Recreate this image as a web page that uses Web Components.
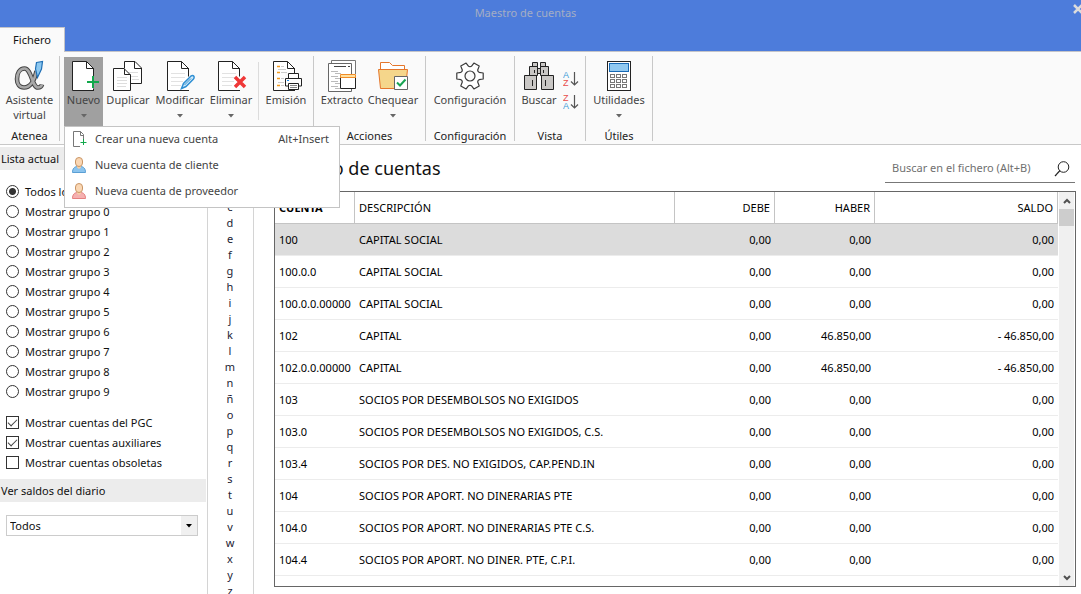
<!DOCTYPE html>
<html lang="es">
<head>
<meta charset="utf-8">
<meta name="viewport" content="width=device-width, initial-scale=1">
<title>Maestro de cuentas</title>
<style>
  html, body { margin: 0; height: 100%; }
  body { font: 11px/16px "Noto Sans", "Open Sans", sans-serif; color: #111; background: #fff; overflow: hidden; }
</style>
</head>
<body>
<accounts-app></accounts-app>

<script>
const define = (name, html, setup) => {
  const template = document.createElement('template');
  template.innerHTML = html;
  customElements.define(name, class extends HTMLElement {
    constructor() {
      super();
      this.attachShadow({ mode: 'open' }).append(template.content.cloneNode(true));
    }
    connectedCallback() {
      if (setup && !this.ready) { this.ready = true; setup.call(this, this.shadowRoot); }
    }
  });
};

/* Icon drawings: the first entry is the viewBox, the second the shapes */
const person = (body, edge) => `
  <path d="M1.5 15.5c0-4 2-6 5-6h3c3 0 5 2 5 6z" fill="${body}" stroke="${edge}"/>
  <path d="M6 8h4v2.500l-2 1.500l-2-1.500z" fill="#f5cfa8"/>
  <rect x="4.500" y="0.500" width="7" height="9" rx="3.500" fill="#fad7b4" stroke="#c99565"/>`;
const page = (x, lines) => `
  <path d="M${x}.5 1.500H${x + 14.5}L${x + 21.5} 8.500V30.500H${x}.5z" fill="#fff"/>
  <path d="M${x + 22} 30.500H${x}.5V1.500H${x + 14.5}L${x + 21.5} 8.500V16.500" fill="none" stroke="#222"/>
  <path d="M${x + 14}.5 1.500V8.500H${x + 22}" fill="none" stroke="#222"/>
  ${lines ? `<path d="M${x + 4} 13.500h14M${x + 4} 17.500h14M${x + 4} 21.500h12M${x + 4} 25.500h10" stroke="#e2e2e2"/>` : ''}`;
const keys = Array.from({ length: 9 }, (_, i) =>
  `<rect x="${7.5 + (i % 3) * 6}" y="${14.5 + Math.floor(i / 3) * 5}" width="4" height="3" fill="#fff" stroke="#777"/>`).join('');
const gearPath = (() => {
  const p = [];
  for (let i = 0; i < 6; i++) {
    [[-22, 9.8], [-13, 13.5], [13, 13.5], [22, 9.8], [30, 9.2]].forEach(([a, r]) => {
      const t = (i * 60 + a) * Math.PI / 180;
      p.push((16 + r * Math.cos(t)).toFixed(1) + ' ' + (16 + r * Math.sin(t)).toFixed(1));
    });
  }
  return 'M' + p.join('L') + 'Z';
})();
const alphaCurve = 'M22.500 11C20.500 20 16.500 27.500 10 27.500C5.500 27.500 3 24 3 19C3 13.500 5.500 8.500 10.500 8.500C17.500 8.500 18 27.500 24 27.500C26.500 27.500 27.500 26.500 28 24.500';

const ICONS = {
  alpha: ['0 0 32 32', `
    <path d="${alphaCurve}" fill="none" stroke="#444" stroke-width="4.600"/>
    <path d="${alphaCurve}" fill="none" stroke="#a8a8a8" stroke-width="2.600"/>
    <path d="M22.500 2.500L28.500 1.500L27.500 9L23.500 17.500L21.500 9z" fill="#8cc8f0" stroke="#1f6fb5" stroke-width="1.200"/>`],
  nuevo: ['0 0 32 32', page(4) + '<path d="M25.500 30.500V28.500" stroke="#222"/><path d="M25 16V28M19 22H31" stroke="#12a84c" stroke-width="2"/>'],
  duplicar: ['0 0 32 32', `
    <path d="M12.500 8V1.500H23L29.500 8V23.500H19" fill="#fff" stroke="#222"/>
    <path d="M22.500 1.500V8.500H29.500" fill="none" stroke="#222"/>
    <path d="M16 12.500h10M19 16.500h7M20 19.500h7" stroke="#ddd"/>
    <path d="M1.500 8.500H12L18.500 15V30.500H1.500z" fill="#fff" stroke="#222"/>
    <path d="M12.500 8.500V14.500H18.500" fill="none" stroke="#222"/>
    <path d="M5 17.500h10M5 20.500h10M5 23.500h10M5 26.500h9" stroke="#ddd"/>`],
  modificar: ['0 0 32 32', page(3, true) + `
    <path d="M17.500 28.500L19.500 23.500L27 16Q29 15 30 16.500Q30.500 18 29.500 19L22 26.500z" fill="#d5ecfa" stroke="#2f8fd3" stroke-width="1.500"/>
    <path d="M20.500 25L27 18.500" stroke="#2f8fd3"/>`],
  eliminar: ['0 0 32 32', page(3, true) + '<path d="M20 17L30 27M30 17L20 27" stroke="#ef3737" stroke-width="3.500"/>'],
  emision: ['0 0 32 32', page(3) + `
    <path d="M7 6.500h3M7 12.500h3M7 18.500h3M7 25.500h3" stroke="#f39a1d" stroke-width="1.400"/>
    <path d="M8 9.500h8M11 6.500h3M11 12.500h6M11 18.500h3M11 25.500h3M8 22.500h6" stroke="#ccc"/>
    <path d="M15 13h17v17H15z" fill="#fafafa"/>
    <path d="M18.500 18V13.500H28.500V18M18.500 26H15.500V18.500H31.500V26H28.500" fill="#fff" stroke="#222"/>
    <path d="M18.500 23.500H28.500V29.500H18.500z" fill="#fff" stroke="#222"/>
    <path d="M20 25.500h7M20 27.500h7" stroke="#888"/><path d="M17 20.500h2" stroke="#1e88e5"/>`],
  extracto: ['0 0 32 32', `
    <path d="M5.500 3V0.500H29.500V14" fill="#fff" stroke="#777"/>
    <path d="M2.500 3.500H25.500V31.500H2.500z" fill="#fff" stroke="#666"/>
    <path d="M8 6.500h12" stroke="#444"/><path d="M22 6.500h2" stroke="#444"/>
    <path d="M5 11.500h7M5 16.500h7M5 21.500h7M5 26.500h7M9 13.500h6M9 18.500h5M9 23.500h5M9 28.500h5" stroke="#bbb"/>
    <path d="M14.500 17.500H29.500V28.500H14.500z" fill="#fff" stroke="#222"/>
    <path d="M14.500 14.500H29.500V17.500H14.500z" fill="#ffe0a0" stroke="#f08c28"/>`],
  chequear: ['0 0 32 32', `
    <path d="M3.500 10V2.500H12.500L15.500 5.500H27.500V10" fill="#fff" stroke="#e5762b"/>
    <path d="M1.500 9.500H30.500L28.500 28.500H3.500z" fill="#f5d68b" stroke="#e5762b"/>
    <path d="M17.500 16.500H30.500V29.500H17.500z" fill="#fff" stroke="#666"/>
    <path d="M20 22.500L23 25.500L28.500 19.500" fill="none" stroke="#18a452" stroke-width="2"/>`],
  config: ['0 0 32 32', `<path d="${gearPath}" fill="#fff" stroke="#3a3a3a" stroke-width="1.200" stroke-linejoin="round"/>
    <circle cx="16" cy="16" r="5" fill="#fafafa" stroke="#3a3a3a" stroke-width="1.200"/>`],
  buscar: ['0 0 32 32', `
    <g fill="#c9c7c5" stroke="#222">
    <path d="M14.500 8.500h3v5h-3z"/>
    <path d="M9.500 2.500h5v4h-5zM17.500 2.500h5v4h-5zM6.500 6.500h8v9h-8zM17.500 6.500h8v9h-8zM1.500 15.500h12v14h-12zM18.500 15.500h12v14h-12z"/>
    <path d="M11.500 10v3M20.500 10v3M9.500 20v6M22.500 20v6"/></g>`],
  utilidades: ['0 0 32 32', `
    <rect x="4.500" y="1.500" width="23" height="29" fill="#fff" stroke="#222"/>
    <rect x="6.500" y="3.500" width="19" height="8" fill="#90c8f0" stroke="#1769b5"/>${keys}`],
  az: ['0 0 16 18', `<g font-family="Liberation Sans, sans-serif" font-size="9"><text x="0" y="8" fill="#3c9bd8">A</text><text x="0" y="16" fill="#e84c4c">Z</text></g>
    <path d="M11.500 2V15M8 11.500L11.500 15L15 11.500" fill="none" stroke="#555" stroke-width="1.200"/>`],
  za: ['0 0 16 18', `<g font-family="Liberation Sans, sans-serif" font-size="9"><text x="0" y="8" fill="#e84c4c">Z</text><text x="0" y="16" fill="#3c9bd8">A</text></g>
    <path d="M11.500 2V15M8 11.500L11.500 15L15 11.500" fill="none" stroke="#555" stroke-width="1.200"/>`],
  doc: ['0 0 16 16', `<path d="M9 15.500H2.500V0.500H9.500L12.500 3.500V8" fill="#fff" stroke="#777"/><path d="M9.500 0.500V4.500H13" fill="none" stroke="#777"/>
    <path d="M12.500 8v6M9.500 11.500h6" stroke="#12a84c"/>`],
  cliente: ['0 0 16 16', person('#8cc4ee', '#5a9fd4')],
  proveedor: ['0 0 16 16', person('#f5b0b0', '#e58080')],
  lupa: ['0 0 16 16', '<circle cx="9.500" cy="6" r="5.300" fill="none" stroke="#222"/><path d="M6 9.500L1 15" stroke="#222" stroke-width="1.200"/>'],
  close: ['0 0 10 10', '<path d="M1 1L9 9M9 1L1 9" stroke="#dcdcdc" stroke-width="2.500"/>'],
  up: ['0 0 8 8', '<path d="M1 6L4 3L7 6" fill="none" stroke="#505050" stroke-width="2"/>'],
  down: ['0 0 8 8', '<path d="M1 2L4 5L7 2" fill="none" stroke="#505050" stroke-width="2"/>'],
  arrow: ['0 0 6 4', '<path d="M0 0H6L3 3.500z" fill="currentColor"/>']
};

define('ui-icon', `<style>
  :host { display: block; flex: none; line-height: 0; }
  svg { display: block; }
</style><span></span>`, function (root) {
  const [box, body] = ICONS[this.getAttribute('name')];
  const [, , w, h] = box.split(' ');
  root.querySelector('span').innerHTML = `<svg viewBox="${box}" width="${w}" height="${h}" aria-hidden="true">${body}</svg>`;
});

define('title-bar', `<style>
  :host { display: grid; grid-template-columns: 1fr auto 1fr; height: 27px; background: #4d7cdb; overflow: hidden; }
  h1 { grid-column: 2; margin: 0; font-size: 11px; line-height: 26px; font-weight: 400; color: #a4adc4; padding-right: 30px; }
  button { justify-self: end; align-self: start; margin: 4px -2px 0 0; padding: 0; border: 0; background: none; }
</style>
<h1><slot></slot></h1><button aria-label="Cerrar"><ui-icon name="close"></ui-icon></button>`);

define('ribbon-tabs', `<style>
  :host { display: flex; height: 24px; background: #4d7cdb; border-bottom: 1px solid #c4c4c8; }
  button { box-sizing: border-box; width: 65px; height: 25px; padding: 0; border: solid #c4c4c8; border-width: 1px 1px 0 0; background: #fafafa; font: inherit; color: #111; }
</style><button role="tab" aria-selected="true"><slot></slot></button>`);

define('ribbon-button', `<style>
  :host { display: block; flex: none; }
  button { box-sizing: border-box; width: 100%; height: 70px; margin: 0; padding: 3px 0 0; border: 0; background: none; font: inherit; line-height: 15px; color: #444;
    display: flex; flex-direction: column; align-items: center; white-space: nowrap; }
  :host([active]) button { background: #a0a0a0; }
  .label { display: block; text-align: center; }
  ui-icon[name=arrow] { margin-top: 7px; color: #666; }
</style>
<button><span class="label"><slot></slot></span></button>`, function (root) {
  const icon = name => {
    const el = document.createElement('ui-icon');
    el.setAttribute('name', name);
    return el;
  };
  const button = root.querySelector('button');
  button.prepend(icon(this.getAttribute('icon')));
  if (this.hasAttribute('drop')) button.append(icon('arrow'));
});

define('ribbon-group', `<style>
  :host { display: flex; flex-direction: column; flex: none; box-sizing: border-box; border-right: 1px solid #c8c8c8; height: 85px; }
  .tools { display: flex; height: 70px; padding-top: 1px; justify-content: center; }
  :host([start]) .tools { justify-content: flex-start; padding-left: 4px; }
  .name { text-align: center; line-height: 18px; color: #222; white-space: nowrap; }
</style>
<div class="tools"><slot></slot></div><div class="name"><slot name="name"></slot></div>`);

define('menu-entry', `<style>
  :host { display: block; }
  button { display: flex; align-items: center; width: 100%; height: 26px; margin: 0; padding: 0 10px 2px 6px; border: 0; background: none; font: inherit; color: #444; text-align: left; }
  .text { flex: 1; margin-left: 8px; }
</style>
<button role="menuitem"><slot name="icon"></slot><span class="text"><slot></slot></span><slot name="key"></slot></button>`);

define('drop-menu', `<style>
  :host { display: block; box-sizing: border-box; width: 276px; padding-bottom: 2px; border: 1px solid #c4c4c4; background: #fff; }
</style><div role="menu"><slot></slot></div>`);

define('ribbon-bar', `<style>
  :host { display: flex; position: relative; z-index: 2; height: 88px; padding-top: 4px; background: #fafafa; border-bottom: 1px solid #c8c8c8; }
  .g1 { width: 60px; } .g2 { width: 254px; } .g3 { width: 112px; } .g4 { width: 89px; } .g5 { width: 71px; } .g6 { width: 67px; }
  .g1 ribbon-button { width: 58px; }
  .anchor { position: relative; width: 39px; }
  drop-menu { position: absolute; left: 0; top: 69px; }
  .w40 { width: 40px; } .w50 { width: 50px; } .w54 { width: 54px; } .w48 { width: 48px; }
  .rule { width: 1px; height: 58px; margin: 5px 0 0 3px; background: #dcdcdc; }
  .sort { display: flex; flex-direction: column; gap: 5px; padding: 13px 0 0 4px; }
  .sort button { display: block; margin: 0; padding: 0; border: 0; background: none; }
</style>
<ribbon-group class="g1"><ribbon-button icon="alpha">Asistente<br>virtual</ribbon-button><span slot="name">Atenea</span></ribbon-group>
<ribbon-group class="g2" start>
  <div class="anchor"><ribbon-button icon="nuevo" drop active>Nuevo</ribbon-button>
    <drop-menu>
      <menu-entry><ui-icon slot="icon" name="doc"></ui-icon>Crear una nueva cuenta<span slot="key">Alt+Insert</span></menu-entry>
      <menu-entry><ui-icon slot="icon" name="cliente"></ui-icon>Nueva cuenta de cliente</menu-entry>
      <menu-entry><ui-icon slot="icon" name="proveedor"></ui-icon>Nueva cuenta de proveedor</menu-entry>
    </drop-menu>
  </div>
  <ribbon-button class="w50" icon="duplicar">Duplicar</ribbon-button>
  <ribbon-button class="w54" icon="modificar" drop>Modificar</ribbon-button>
  <ribbon-button class="w48" icon="eliminar" drop>Eliminar</ribbon-button>
  <div class="rule"></div>
  <ribbon-button class="w54" icon="emision">Emisión</ribbon-button>
</ribbon-group>
<ribbon-group class="g3" start><ribbon-button class="w48" icon="extracto">Extracto</ribbon-button><ribbon-button class="w54" icon="chequear" drop>Chequear</ribbon-button><span slot="name">Acciones</span></ribbon-group>
<ribbon-group class="g4"><ribbon-button icon="config">Configuración</ribbon-button><span slot="name">Configuración</span></ribbon-group>
<ribbon-group class="g5" start><ribbon-button class="w40" icon="buscar">Buscar</ribbon-button>
  <div class="sort"><button aria-label="Orden ascendente"><ui-icon name="az"></ui-icon></button><button aria-label="Orden descendente"><ui-icon name="za"></ui-icon></button></div>
  <span slot="name">Vista</span></ribbon-group>
<ribbon-group class="g6"><ribbon-button icon="utilidades" drop>Utilidades</ribbon-button><span slot="name">Útiles</span></ribbon-group>`);

define('side-panel', `<style>
  :host { display: block; flex: none; box-sizing: border-box; width: 208px; padding-top: 2px; border-right: 1px solid #d4d4d4; }
  h2 { margin: 0 1px 0 0; padding-left: 1px; font-size: 11px; line-height: 23px; font-weight: 400; background: #ececec; }
  fieldset { margin: 0; padding: 0 0 0 6px; border: 0; }
  .radios { padding-top: 12px; }
  .checks { padding: 11px 0 6px 6px; }
  label { display: flex; align-items: center; gap: 6px; height: 20px; }
  input { appearance: none; box-sizing: border-box; flex: none; width: 13px; height: 13px; margin: 0 0 1px; border: 1px solid #333; background: #fff; }
  input[type=radio] { border-radius: 50%; }
  input[type=radio]:checked { background: radial-gradient(circle, #333 0 3px, #fff 4px); }
  input[type=checkbox]:checked::before { content: ""; display: block; box-sizing: border-box; width: 9px; height: 5px; margin: 2px 0 0 1px; border: solid #444; border-width: 0 0 1px 1px; transform: rotate(-45deg); }
  .combo { display: grid; width: 192px; height: 21px; margin: 13px 0 0 6px; grid-template-columns: 1fr 17px; align-items: center; }
  select { grid-area: 1 / 1 / 2 / 3; appearance: none; width: 100%; height: 21px; box-sizing: border-box; padding: 0 3px; margin: 0; border: 1px solid #ccc; border-radius: 0; background: #fff; font: inherit; color: #111; }
  .combo span { grid-area: 1 / 2 / 2 / 3; z-index: 1; display: grid; place-items: center; height: 19px; margin-right: 1px; background: #f0f0f0; pointer-events: none; color: #000; }
</style>
<h2>Lista actual</h2>
<fieldset class="radios" aria-label="Lista actual"></fieldset>
<fieldset class="checks" aria-label="Filtros">
  <label><input type="checkbox" checked>Mostrar cuentas del PGC</label>
  <label><input type="checkbox" checked>Mostrar cuentas auxiliares</label>
  <label><input type="checkbox">Mostrar cuentas obsoletas</label>
</fieldset>
<h2 id="saldos">Ver saldos del diario</h2>
<div class="combo"><select aria-labelledby="saldos"><option>Todos</option></select><span><ui-icon name="arrow"></ui-icon></span></div>`, function (root) {
  const names = ['Todos los grupos', ...Array.from({ length: 10 }, (_, i) => `Mostrar grupo ${i}`)];
  root.querySelector('.radios').innerHTML = names.map((n, i) =>
    `<label><input type="radio" name="grupo"${i ? '' : ' checked'}>${n}</label>`).join('');
});

define('letter-index', `<style>
  :host { display: block; flex: none; box-sizing: border-box; width: 46px; padding: 54px 1px 0 0; border-right: 1px solid #d4d4d4; overflow: hidden; }
  a { display: block; height: 16px; line-height: 16px; text-align: center; color: #223; text-decoration: none; }
</style><nav aria-label="Índice"></nav>`, function (root) {
  root.querySelector('nav').innerHTML = [...'cdefghijklmnñopqrstuvwxyz'].map(c => `<a href="#${c}">${c}</a>`).join('');
});

define('search-box', `<style>
  :host { display: flex; align-items: center; width: 190px; height: 27px; box-sizing: border-box; border-bottom: 1px solid #777; }
  input { flex: 1; min-width: 0; padding: 0 0 2px 7px; margin: 0; border: 0; outline: 0; background: none; font: inherit; color: #111; }
  input::placeholder { color: #707070; opacity: 1; }
  button { margin: 0 5px 0 0; padding: 0; border: 0; background: none; }
</style><input type="search" placeholder="Buscar en el fichero (Alt+B)" aria-label="Buscar en el fichero (Alt+B)"><button aria-label="Buscar"><ui-icon name="lupa"></ui-icon></button>`);

define('scroll-rail', `<style>
  :host { display: flex; flex-direction: column; align-items: center; flex: none; width: 15px; margin: 0 1px; background: #f0f0f0; }
  button { width: 15px; height: 17px; margin: 0; padding: 0; border: 0; background: none; display: grid; place-items: center; }
  .thumb { width: 15px; height: 17px; background: #cdcdcd; }
  .gap { flex: 1; }
</style><button aria-label="Subir"><ui-icon name="up"></ui-icon></button><div class="thumb"></div><div class="gap"></div><button aria-label="Bajar"><ui-icon name="down"></ui-icon></button>`);

define('accounts-table', `<style>
  :host { display: flex; box-sizing: border-box; min-height: 0; border: 1px solid #666; }
  .pane { flex: 1; min-width: 0; overflow: hidden; }
  table { width: 100%; table-layout: fixed; border-collapse: separate; border-spacing: 0; }
  .cuenta { width: 80px; } .num { width: 100px; } .saldo { width: 183px; }
  th, td { box-sizing: border-box; height: 32px; padding: 0 4px; line-height: 16px; white-space: nowrap; text-align: left; font-weight: 400; color: #000; }
  th { border-right: 1px solid #c4c4c4; border-bottom: 1px solid #c4c4c4; }
  th.key { font-weight: 700; }
  td { border-bottom: 1px solid #ececec; }
  .n { text-align: right; }
  tr.sel td { background: #dcdcdc; }
</style>
<div class="pane"><table>
  <colgroup><col class="cuenta"><col><col class="num"><col class="num"><col class="saldo"></colgroup>
  <thead><tr><th class="key">CUENTA</th><th>DESCRIPCIÓN</th><th class="n">DEBE</th><th class="n">HABER</th><th class="n">SALDO</th></tr></thead>
  <tbody></tbody></table></div>
<scroll-rail></scroll-rail>`, function (root) {
  const z = '0,00';
  const rows = [
    ['100', 'CAPITAL SOCIAL', z, z, z],
    ['100.0.0', 'CAPITAL SOCIAL', z, z, z],
    ['100.0.0.00000', 'CAPITAL SOCIAL', z, z, z],
    ['102', 'CAPITAL', z, '46.850,00', '- 46.850,00'],
    ['102.0.0.00000', 'CAPITAL', z, '46.850,00', '- 46.850,00'],
    ['103', 'SOCIOS POR DESEMBOLSOS NO EXIGIDOS', z, z, z],
    ['103.0', 'SOCIOS POR DESEMBOLSOS NO EXIGIDOS, C.S.', z, z, z],
    ['103.4', 'SOCIOS POR DES. NO EXIGIDOS, CAP.PEND.IN', z, z, z],
    ['104', 'SOCIOS POR APORT. NO DINERARIAS PTE', z, z, z],
    ['104.0', 'SOCIOS POR APORT. NO DINERARIAS PTE C.S.', z, z, z],
    ['104.4', 'SOCIOS POR APORT. NO DINER. PTE, C.P.I.', z, z, z]
  ];
  root.querySelector('tbody').innerHTML = rows.map((r, i) =>
    `<tr${i ? '' : ' class="sel"'}>${r.map((c, j) => `<td${j > 1 ? ' class="n"' : ''}>${c}</td>`).join('')}</tr>`).join('');
});

define('accounts-view', `<style>
  :host { display: flex; flex-direction: column; flex: 1; min-width: 0; box-sizing: border-box; padding: 11px 5px 7px 20px; }
  header { display: flex; justify-content: space-between; align-items: flex-start; height: 35px; padding-right: 1px; }
  h2 { margin: 0; font-size: 18px; line-height: 24px; font-weight: 400; }
  accounts-table { flex: 1; }
</style>
<header><h2>Maestro de cuentas</h2><search-box></search-box></header><accounts-table></accounts-table>`);

define('accounts-app', `<style>
  :host { display: flex; flex-direction: column; height: 100vh; }
  main { display: flex; flex: 1; min-height: 0; }
</style>
<title-bar>Maestro de cuentas</title-bar>
<ribbon-tabs>Fichero</ribbon-tabs>
<ribbon-bar></ribbon-bar>
<main><side-panel></side-panel><letter-index></letter-index><accounts-view></accounts-view></main>`);
</script>
</body>
</html>
